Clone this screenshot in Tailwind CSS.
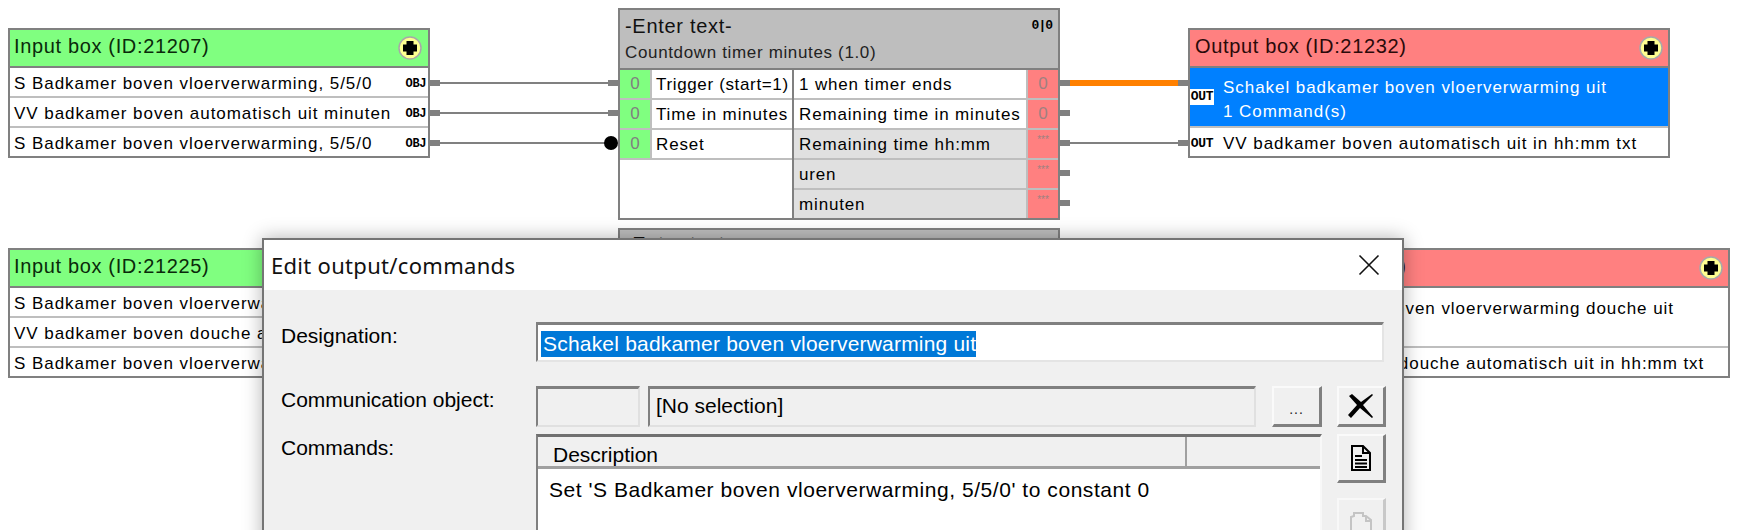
<!DOCTYPE html>
<html lang="en">
<head>
    <meta charset="UTF-8">
    <title>Edit output/commands</title>
    <script src="https://cdn.jsdelivr.net/npm/@tailwindcss/browser@4"></script>
</head>
<body class="bg-white">
<div class="relative w-[1748px] h-[530px] overflow-hidden bg-white text-black font-['Liberation_Sans',sans-serif] text-[17px] tracking-[0.95px]">

    <!-- wires between the blocks -->
    <div class="absolute left-[440px] top-[82px] w-[168px] h-[2px] bg-[#808080]"></div>
    <div class="absolute left-[440px] top-[112px] w-[168px] h-[2px] bg-[#808080]"></div>
    <div class="absolute left-[440px] top-[142px] w-[168px] h-[2px] bg-[#808080]"></div>
    <div class="absolute left-[1070px] top-[80px] w-[108px] h-[6px] bg-[#ff8000]"></div>
    <div class="absolute left-[1070px] top-[142px] w-[108px] h-[2px] bg-[#808080]"></div>

    <!-- pins -->
    <div class="absolute left-[430px] top-[80px] w-[10px] h-[6px] bg-[#808080]"></div>
    <div class="absolute left-[430px] top-[110px] w-[10px] h-[6px] bg-[#808080]"></div>
    <div class="absolute left-[430px] top-[140px] w-[10px] h-[6px] bg-[#808080]"></div>
    <div class="absolute left-[608px] top-[80px] w-[10px] h-[6px] bg-[#808080]"></div>
    <div class="absolute left-[608px] top-[110px] w-[10px] h-[6px] bg-[#808080]"></div>
    <div class="absolute left-[604px] top-[136px] w-[14px] h-[14px] rounded-full bg-black"></div>
    <div class="absolute left-[1060px] top-[80px] w-[10px] h-[6px] bg-[#808080]"></div>
    <div class="absolute left-[1060px] top-[110px] w-[10px] h-[6px] bg-[#808080]"></div>
    <div class="absolute left-[1060px] top-[140px] w-[10px] h-[6px] bg-[#808080]"></div>
    <div class="absolute left-[1060px] top-[170px] w-[10px] h-[6px] bg-[#808080]"></div>
    <div class="absolute left-[1060px] top-[200px] w-[10px] h-[6px] bg-[#808080]"></div>
    <div class="absolute left-[1178px] top-[80px] w-[10px] h-[6px] bg-[#808080]"></div>
    <div class="absolute left-[1178px] top-[140px] w-[10px] h-[6px] bg-[#808080]"></div>

    <!-- Input box 21207 -->
    <div class="absolute left-[8px] top-[28px] w-[422px] border-2 border-[#808080]">
        <div class="h-[38px] bg-[#80ff80] border-b-2 border-[#808080] flex items-center justify-between pl-[4px] pr-[6px]">
            <span class="text-[20px] tracking-[0.65px] text-[#0a2a0a] mb-[4px]">Input box (ID:21207)</span>
            <svg width="24" height="24" viewBox="0 0 24 24"><circle cx="12" cy="12" r="11" fill="#ffff90" stroke="#a8a8a8" stroke-width="1.5"/><path d="M8.500 5h7v3.500H19v7h-3.500V19h-7v-3.500H5v-7h3.500z" fill="#000"/></svg>
        </div>
        <div class="h-[30px] border-b-2 border-[#bebebe] flex items-center justify-between pl-[4px] pr-[2px] pt-[4px]"><span>S Badkamer boven vloerverwarming, 5/5/0</span><span class="font-['Liberation_Mono',monospace] font-bold text-[12px] tracking-[-0.4px]">OBJ</span></div>
        <div class="h-[30px] border-b-2 border-[#bebebe] flex items-center justify-between pl-[4px] pr-[2px] pt-[4px]"><span class="whitespace-nowrap">VV badkamer boven automatisch uit minuten</span><span class="font-['Liberation_Mono',monospace] font-bold text-[12px] tracking-[-0.4px]">OBJ</span></div>
        <div class="h-[28px] flex items-center justify-between pl-[4px] pr-[2px] pt-[4px]"><span>S Badkamer boven vloerverwarming, 5/5/0</span><span class="font-['Liberation_Mono',monospace] font-bold text-[12px] tracking-[-0.4px]">OBJ</span></div>
    </div>

    <!-- Input box 21225 -->
    <div class="absolute left-[8px] top-[248px] w-[422px] border-2 border-[#808080]">
        <div class="h-[38px] bg-[#80ff80] border-b-2 border-[#808080] flex items-center pl-[4px]">
            <span class="text-[20px] tracking-[0.65px] text-[#0a2a0a] mb-[4px]">Input box (ID:21225)</span>
        </div>
        <div class="h-[30px] border-b-2 border-[#bebebe] flex items-center pl-[4px] pt-[4px] whitespace-nowrap">S Badkamer boven vloerverwarming, 5/5/0</div>
        <div class="h-[30px] border-b-2 border-[#bebebe] flex items-center pl-[4px] pt-[4px] whitespace-nowrap">VV badkamer boven douche automatisch uit minuten</div>
        <div class="h-[28px] flex items-center pl-[4px] pt-[4px] whitespace-nowrap">S Badkamer boven vloerverwarming, 5/5/0</div>
    </div>

    <!-- Countdown timer block -->
    <div class="absolute left-[618px] top-[8px] w-[442px] border-2 border-[#808080] bg-white tracking-[0.85px]">
        <div class="h-[58px] bg-[#bebebe] relative pl-[5px] pt-[3px]">
            <div class="text-[20px] tracking-[0.7px] leading-[27px] text-[#111]">-Enter text-</div>
            <div class="tracking-[0.65px] leading-[25px] text-[#222]">Countdown timer minutes (1.0)</div>
            <span class="absolute right-[6px] top-[8px] font-['Liberation_Mono',monospace] font-bold text-[13px] leading-[16px] tracking-[-1px]">0|0</span>
        </div>
        <div class="h-[2px] bg-[#808080]"></div>
        <div class="flex h-[148px]">
            <div class="w-[172px] flex flex-col">
                <div class="h-[30px] flex border-b-2 border-[#bebebe]"><span class="w-[30px] bg-[#80ff80] text-[#808080] tracking-normal flex items-center justify-center">0</span><span class="flex-1 border-l-2 border-[#bebebe] flex items-center pl-[4px] pt-[2px] whitespace-nowrap tracking-[0.65px]">Trigger (start=1)</span></div>
                <div class="h-[30px] flex border-b-2 border-[#bebebe]"><span class="w-[30px] bg-[#80ff80] text-[#808080] tracking-normal flex items-center justify-center">0</span><span class="flex-1 border-l-2 border-[#bebebe] flex items-center pl-[4px] pt-[2px] whitespace-nowrap">Time in minutes</span></div>
                <div class="h-[30px] flex border-b-2 border-[#bebebe]"><span class="w-[30px] bg-[#80ff80] text-[#808080] tracking-normal flex items-center justify-center">0</span><span class="flex-1 border-l-2 border-[#bebebe] flex items-center pl-[4px] pt-[2px] whitespace-nowrap">Reset</span></div>
            </div>
            <div class="w-[2px] bg-[#808080]"></div>
            <div class="w-[264px] flex flex-col">
                <div class="h-[30px] flex border-b-2 border-[#bebebe]"><span class="flex-1 flex items-center pl-[5px] pt-[2px] whitespace-nowrap">1 when timer ends</span><span class="w-[32px] border-l-2 border-[#bebebe] bg-[#ff8080] text-[#a08080] tracking-normal flex items-center justify-center">0</span></div>
                <div class="h-[30px] flex border-b-2 border-[#bebebe]"><span class="flex-1 flex items-center pl-[5px] pt-[2px] whitespace-nowrap">Remaining time in minutes</span><span class="w-[32px] border-l-2 border-[#bebebe] bg-[#ff8080] text-[#a08080] tracking-normal flex items-center justify-center">0</span></div>
                <div class="h-[30px] flex border-b-2 border-[#bebebe] bg-[#e0e0e0]"><span class="flex-1 flex items-center pl-[5px] pt-[2px] whitespace-nowrap">Remaining time hh:mm</span><span class="w-[32px] border-l-2 border-[#bebebe] bg-[#ff8080] text-[#a08080] text-[10px] tracking-normal leading-[20px] text-center">***</span></div>
                <div class="h-[30px] flex border-b-2 border-[#bebebe] bg-[#e0e0e0]"><span class="flex-1 flex items-center pl-[5px] pt-[2px] whitespace-nowrap">uren</span><span class="w-[32px] border-l-2 border-[#bebebe] bg-[#ff8080] text-[#a08080] text-[10px] tracking-normal leading-[20px] text-center">***</span></div>
                <div class="h-[28px] flex bg-[#e0e0e0]"><span class="flex-1 flex items-center pl-[5px] pt-[2px] whitespace-nowrap">minuten</span><span class="w-[32px] border-l-2 border-[#bebebe] bg-[#ff8080] text-[#a08080] text-[10px] tracking-normal leading-[20px] text-center">***</span></div>
            </div>
        </div>
    </div>

    <!-- second timer block, mostly behind the dialog -->
    <div class="absolute left-[618px] top-[228px] w-[442px] h-[80px] border-2 border-[#808080] bg-[#bebebe] pl-[5px] pt-[1px]">
        <div class="text-[20px] tracking-[0.7px] leading-[27px] text-[#111]">-Enter text-</div>
    </div>

    <!-- Output box 21232 -->
    <div class="absolute left-[1188px] top-[28px] w-[482px] border-2 border-[#808080]">
        <div class="h-[38px] bg-[#ff8080] border-b-2 border-[#808080] flex items-center justify-between pl-[5px] pr-[5px]">
            <span class="text-[20px] tracking-[0.65px] text-[#2a0a0a] mb-[4px]">Output box (ID:21232)</span>
            <svg width="24" height="24" viewBox="0 0 24 24"><circle cx="12" cy="12" r="11" fill="#ffff90" stroke="#a8a8a8" stroke-width="1.5"/><path d="M8.500 5h7v3.500H19v7h-3.500V19h-7v-3.500H5v-7h3.500z" fill="#000"/></svg>
        </div>
        <div class="h-[60px] bg-[#0080ff] border-b-2 border-[#bebebe] flex items-center text-white">
            <span class="w-[24px] h-[16px] bg-white text-black font-['Liberation_Mono',monospace] font-bold text-[13px] tracking-[-0.3px] leading-[16px] text-center">OUT</span>
            <div class="pl-[9px] pt-[5px] leading-[24px]">
                <div>Schakel badkamer boven vloerverwarming uit</div>
                <div>1 Command(s)</div>
            </div>
        </div>
        <div class="h-[28px] flex items-center pt-[4px]">
            <span class="w-[24px] font-['Liberation_Mono',monospace] font-bold text-[13px] tracking-[-0.3px] text-center">OUT</span>
            <span class="pl-[9px] whitespace-nowrap">VV badkamer boven automatisch uit in hh:mm txt</span>
        </div>
    </div>

    <!-- Output box, second row -->
    <div class="absolute left-[1188px] top-[248px] w-[542px] border-2 border-[#808080]">
        <div class="h-[38px] bg-[#ff8080] border-b-2 border-[#808080] flex items-center justify-between pl-[5px] pr-[5px]">
            <span class="text-[20px] tracking-[0.65px] text-[#2a0a0a] mb-[4px]">Output box (ID:21240)</span>
            <svg width="24" height="24" viewBox="0 0 24 24"><circle cx="12" cy="12" r="11" fill="#ffff90" stroke="#a8a8a8" stroke-width="1.5"/><path d="M8.500 5h7v3.500H19v7h-3.500V19h-7v-3.500H5v-7h3.500z" fill="#000"/></svg>
        </div>
        <div class="h-[60px] border-b-2 border-[#bebebe] pl-[33px] leading-[24px] pt-[9px] whitespace-nowrap">Schakel badkamer boven vloerverwarming douche uit</div>
        <div class="h-[28px] flex items-center pl-[33px] pt-[4px] whitespace-nowrap">VV badkamer boven douche automatisch uit in hh:mm txt</div>
    </div>

    <!-- Edit output/commands dialog -->
    <div class="absolute left-[262px] top-[238px] w-[1142px] h-[320px] border-2 border-[#757575] bg-[#f0f0f0] tracking-normal shadow-[0_0_18px_rgba(0,0,0,0.3)]">
        <div class="h-[50px] bg-white flex items-center justify-between pl-[7px] pr-[22px]">
            <span class="font-['Noto_Sans',sans-serif] text-[22px] tracking-[0.3px] text-[#111]">Edit output/commands</span>
            <svg width="22" height="22" viewBox="0 0 22 22" fill="none" stroke="#111" stroke-width="1.6"><path d="M1.500 1.500l19 19M20.500 1.500l-19 19"/></svg>
        </div>

        <div class="pl-[17px] pt-[32px] text-[21px] text-black">
            <div class="flex h-[40px]">
                <span class="w-[255px] leading-[28px]">Designation:</span>
                <div class="w-[848px] border-2 border-t-[3px] border-t-[#808080] border-l-[#808080] border-r-[#e4e4e4] border-b-[#e4e4e4] bg-white pl-[3px] pt-[3px]">
                    <span class="inline-block h-[26px] leading-[25px] bg-[#0078d7] text-white pl-[2px] tracking-[0.2px] whitespace-nowrap">Schakel badkamer boven vloerverwarming uit</span>
                </div>
            </div>

            <div class="flex h-[41px] mt-[24px]">
                <span class="w-[255px] leading-[28px]">Communication object:</span>
                <div class="w-[104px] border-2 border-t-[3px] border-t-[#808080] border-l-[#808080] border-r-[#e0e0e0] border-b-[#e0e0e0]"></div>
                <div class="w-[608px] ml-[8px] border-2 border-t-[3px] border-t-[#808080] border-l-[#808080] border-r-[#e0e0e0] border-b-[#e0e0e0] pl-[6px] leading-[34px]">[No selection]</div>
                <div class="w-[50px] ml-[16px] border-2 border-b-[3px] border-r-[3px] border-t-[#fafafa] border-l-[#fafafa] border-r-[#808080] border-b-[#808080] flex items-center justify-center text-[14px] text-[#222] tracking-[1px] pt-[6px]">...</div>
                <div class="w-[49px] ml-[15px] border-2 border-b-[3px] border-r-[3px] border-t-[#fafafa] border-l-[#fafafa] border-r-[#808080] border-b-[#808080] flex items-center justify-center">
                    <svg width="26" height="26" viewBox="0 0 26 26"><path d="M1 3l3-2 9 8 11-8 1 1-10 10 10 12-1 1-12-10-9 10-3-3 9-10z" fill="#000"/></svg>
                </div>
            </div>

            <div class="flex mt-[7px] h-[200px]">
                <span class="w-[255px] leading-[28px]">Commands:</span>
                <div class="w-[786px] border-2 border-t-[3px] border-t-[#707070] border-l-[#808080] border-r-[#f8f8f8] border-b-[#f8f8f8] bg-white">
                    <div class="flex h-[32px] bg-[#f0f0f0] border-b-[3px] border-[#a0a0a0]">
                        <span class="w-[649px] pl-[15px] leading-[36px] border-r-2 border-[#a0a0a0]">Description</span>
                    </div>
                    <div class="pl-[11px] pt-[5px] leading-[32px] tracking-[0.55px] whitespace-nowrap">Set 'S Badkamer boven vloerverwarming, 5/5/0' to constant 0</div>
                </div>
                <div class="w-[49px] ml-[15px] flex flex-col gap-[15px]">
                    <div class="h-[49px] border-2 border-b-[3px] border-r-[3px] border-t-[#fafafa] border-l-[#fafafa] border-r-[#808080] border-b-[#808080] flex items-center justify-center">
                        <svg width="20" height="26" viewBox="0 0 20 26" fill="none" stroke="#000" stroke-width="2"><path d="M1 1h11l7 7v17H1z"/><path d="M12 1v7h7M4 11h7M4 15h12M4 18.500h12M4 22h12"/></svg>
                    </div>
                    <div class="h-[49px] border-2 border-b-[3px] border-r-[3px] border-t-[#f8f8f8] border-l-[#f8f8f8] border-r-[#c8c8c8] border-b-[#c8c8c8] flex items-start justify-center pt-[12px]">
                        <svg width="22" height="20" viewBox="0 0 22 20" fill="none" stroke="#c4c4c4" stroke-width="2"><path d="M1 20V5l3-1V1h9v3h3l5 4v12"/><path d="M16 4v5h5"/></svg>
                    </div>
                </div>
            </div>
        </div>
    </div>
</div>
</body>
</html>
